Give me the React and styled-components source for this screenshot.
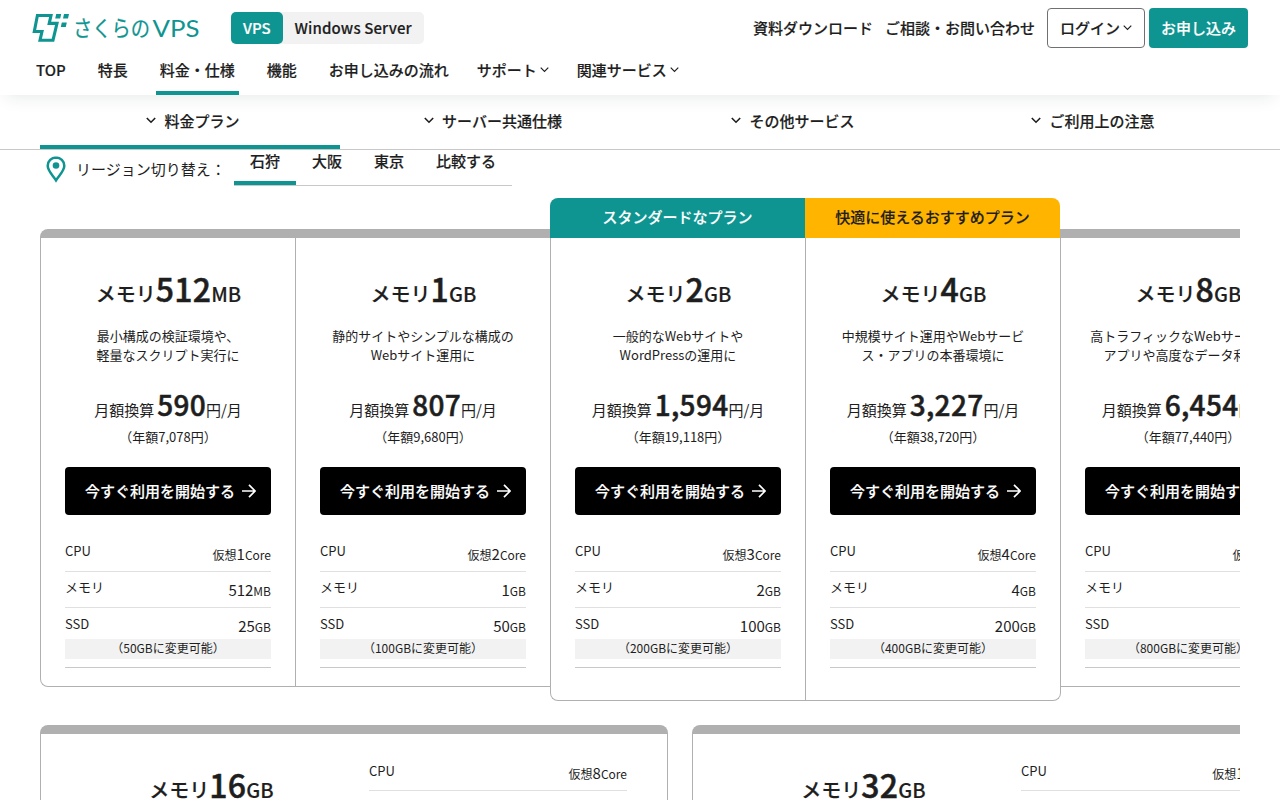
import React from "react";
import styled, { createGlobalStyle, css } from "styled-components";

const teal = "#0f9591";
const ink = "#1e1e1e";
const line = "#b0b0b0";

// Noto Sans CJK has no 600, so thicken the medium weight a little
const semiBold = css`
  font-weight: 500;
  -webkit-text-stroke: 0.16px currentColor;
`;

const GlobalStyle = createGlobalStyle`
  * {
    box-sizing: border-box;
  }
  body {
    margin: 0;
    height: 800px;
    overflow: hidden;
    background: #fff;
    color: ${ink};
    font-family: "Noto Sans CJK JP", "Noto Sans", sans-serif;
    font-size: 15px;
  }
  a {
    color: inherit;
    text-decoration: none;
  }
`;

const plans = [
  {
    size: "512",
    unit: "MB",
    desc: ["最小構成の検証環境や、", "軽量なスクリプト実行に"],
    month: "590",
    year: "7,078",
    core: "1",
    ssd: "25",
    max: "50",
  },
  {
    size: "1",
    unit: "GB",
    desc: ["静的サイトやシンプルな構成の", "Webサイト運用に"],
    month: "807",
    year: "9,680",
    core: "2",
    ssd: "50",
    max: "100",
  },
  {
    size: "2",
    unit: "GB",
    desc: ["一般的なWebサイトや", "WordPressの運用に"],
    month: "1,594",
    year: "19,118",
    core: "3",
    ssd: "100",
    max: "200",
    ribbon: "スタンダードなプラン",
  },
  {
    size: "4",
    unit: "GB",
    desc: ["中規模サイト運用やWebサービ", "ス・アプリの本番環境に"],
    month: "3,227",
    year: "38,720",
    core: "4",
    ssd: "200",
    max: "400",
    ribbon: "快適に使えるおすすめプラン",
    recommended: true,
  },
  {
    size: "8",
    unit: "GB",
    desc: ["高トラフィックなWebサービス・", "アプリや高度なデータ利用に"],
    month: "6,454",
    year: "77,440",
    core: "6",
    ssd: "400",
    max: "800",
  },
];

const largePlans = [
  { size: "16", core: "8" },
  { size: "32", core: "10" },
];

const Chevron = ({ size = 9, stroke = 1.3 }) => (
  <svg width={size} height={size} viewBox="0 0 10 10" fill="none">
    <path d="M.8 3L5 7.200 9.200 3" stroke="currentColor" strokeWidth={stroke} />
  </svg>
);

const Arrow = () => (
  <svg width="14" height="14" viewBox="0 0 14 14" fill="none">
    <path d="M0 7h13M7 .8L13.1 7 7 13.2" stroke="currentColor" strokeWidth="1.7" />
  </svg>
);

const Pin = () => (
  <svg width="20" height="27" viewBox="0 0 20 27">
    <path
      d="M10 1.400C5.400 1.400 1.700 5 1.700 9.700c0 5.200 5 9.300 8.300 14.600 3.300-5.300 8.300-9.400 8.300-14.600 0-4.700-3.700-8.300-8.300-8.300z"
      fill="none"
      stroke={teal}
      strokeWidth="2.500"
    />
    <circle cx="10" cy="9.500" r="3.300" fill={teal} />
  </svg>
);

const Logo = () => (
  <svg width="170" height="36" viewBox="0 0 170 36" fill={teal}>
    <path
      d="M5.400 8.500H19L17.200 16.400H25L21 33.200H8L10 24.500H2.300z"
      fill="none"
      stroke={teal}
      strokeWidth="3.100"
    />
    <path d="M24.200 7h5l-1 4.400h-5zM32 7h5l-1 4.400h-5zM29.800 15.500h5l-1 4.400h-5z" />
    <text
      fontSize="22"
      stroke={teal}
      strokeWidth=".2"
      transform="translate(41 29) scale(.875 1)"
    >
      さくらの
    </text>
    <text
      x="120.500"
      y="29.500"
      fontSize="23"
      fontFamily="Lato, sans-serif"
      textLength="47"
      lengthAdjust="spacingAndGlyphs"
    >
      VPS
    </text>
  </svg>
);

const Header = styled.header`
  position: relative;
  z-index: 2;
  height: 95px;
  background: #fff;
  box-shadow: 0 8px 16px -6px rgba(0, 40, 40, 0.1);
  ${semiBold}
`;

const HeaderTop = styled.div`
  display: flex;
  align-items: center;
  height: 56px;
  padding: 0 32px;
`;

const LogoLink = styled.a`
  display: flex;
  margin: -6px 29px 0 0;
  font-weight: 400;
  -webkit-text-stroke: 0;
`;

const Switch = styled.div`
  display: flex;
  border-radius: 5px;
  background: #f2f2f2;
`;

const SwitchItem = styled.a`
  height: 32px;
  padding: 0 12px;
  border-radius: 5px;
  letter-spacing: ${(p) => (p.$active ? 0 : 0.12)}px;
  line-height: 32px;
  ${(p) => p.$active && `background: ${teal}; color: #fff;`}
`;

const HeaderLinks = styled.div`
  display: flex;
  align-items: center;
  gap: 12px;
  margin-left: auto;
`;

const HeaderLink = styled.a`
  padding-bottom: 2px;
`;

const HeaderButtons = styled.div`
  display: flex;
  gap: 4px;
`;

const HeaderButton = styled.a`
  display: flex;
  align-items: center;
  gap: 3px;
  height: 40px;
  padding: 0 12px 2px;
  border: ${(p) => (p.$primary ? "none" : "1px solid #707070")};
  border-radius: 4px;
  background: ${(p) => (p.$primary ? teal : "#fff")};
  color: ${(p) => (p.$primary ? "#fff" : ink)};
`;

const GlobalNav = styled.nav`
  display: flex;
  gap: 24px;
  height: 39px;
  padding: 0 32px;
`;

const GlobalNavItem = styled.a`
  display: flex;
  align-items: center;
  gap: 3px;
  height: 39px;
  padding: ${(p) => (p.$menu ? "0 4px 8px 0" : "0 4px 8px")};
  border-bottom: 4px solid ${(p) => (p.$active ? teal : "transparent")};
  white-space: nowrap;
`;

const PageNav = styled.nav`
  display: grid;
  grid-template-columns: repeat(4, 300px);
  justify-content: center;
  height: 55px;
  border-bottom: 1px solid #c8c8c8;
  ${semiBold}
`;

const PageNavItem = styled.a`
  display: flex;
  align-items: center;
  justify-content: center;
  gap: 8px;
  padding: 0 0 0 6px;
  border-bottom: 4px solid ${(p) => (p.$active ? teal : "transparent")};
`;

const Region = styled.div`
  display: flex;
  height: 36px;
  padding-left: 46px;
`;

const RegionLabel = styled.div`
  display: flex;
  align-items: center;
  gap: 10px;
  width: 188px;
  white-space: nowrap;
  svg {
    margin-top: 2px;
  }
`;

const RegionTabs = styled.div`
  display: flex;
  border-bottom: 1px solid #c8c8c8;
`;

const RegionTab = styled.a`
  height: 35px;
  padding: 0 16px;
  border-bottom: 4px solid ${(p) => (p.$active ? teal : "transparent")};
  line-height: 21px;
  ${semiBold}
`;

const Plans = styled.main`
  margin: 0 40px;
  padding-top: 12px;
  overflow: hidden;
`;

const PlanRow = styled.div`
  display: flex;
  align-items: flex-start;
  height: 503px;
`;

const Plan = styled.section`
  position: relative;
  flex: none;
  width: 255px;
  margin-top: ${(p) => (p.$featured ? 0 : 31)}px;
`;

const Ribbon = styled.div`
  height: 40px;
  border-radius: ${(p) => (p.$recommended ? "0 8px 0 0" : "8px 0 0 0")};
  background: ${(p) => (p.$recommended ? "#ffb400" : teal)};
  color: ${(p) => (p.$recommended ? ink : "#fff")};
  line-height: 37px;
  text-align: center;
  ${semiBold}
`;

const Bar = styled.div`
  height: 9px;
  border-radius: ${(p) => p.$radius || 0};
  background: ${line};
`;

const PlanBody = styled.div`
  height: ${(p) => (p.$featured ? 463 : 449)}px;
  padding: 26px 24px 0;
  border: solid ${line};
  border-width: 0 0 1px 1px;
  ${(p) => p.$first && "border-bottom-left-radius: 8px;"}
  ${(p) => p.$featured && !p.$last && "border-bottom-left-radius: 8px;"}
  ${(p) =>
    p.$last &&
    `
    position: relative;
    z-index: 1;
    width: 256px;
    border-right-width: 1px;
    border-bottom-right-radius: 8px;
  `}
`;

const Title = styled.h3`
  margin: 0;
  height: 50px;
  padding-left: 1px;
  font-size: 20px;
  line-height: 49px;
  text-align: center;
  white-space: nowrap;
  ${semiBold}
  b {
    font-size: 32px;
    font-weight: 500;
    letter-spacing: 0.2px;
    -webkit-text-stroke-width: 0.5px;
  }
`;

const Description = styled.p`
  display: flex;
  flex-direction: column;
  align-items: center;
  height: 39px;
  margin: 12px -12px 0;
  font-size: 13px;
  line-height: 19px;
  white-space: nowrap;
`;

const Price = styled.p`
  height: 42px;
  margin: 19px 0 0;
  line-height: 40px;
  text-align: center;
  white-space: nowrap;
  b {
    margin-left: 3px;
    font-size: 28px;
    font-weight: 500;
    letter-spacing: 0.3px;
    -webkit-text-stroke: 0.5px currentColor;
  }
`;

const YearPrice = styled.p`
  margin: 0;
  font-size: 13px;
  line-height: 22px;
  text-align: center;
`;

const StartButton = styled.a`
  display: flex;
  align-items: center;
  gap: 7px;
  height: 48px;
  margin: 19px 0 21px;
  padding: 0 0 2px 20px;
  border-radius: 4px;
  background: #000;
  white-space: nowrap;
  ${semiBold}
  && {
    color: #fff;
  }
  svg {
    margin-top: 2px;
  }
`;

const Spec = styled.dl`
  display: flex;
  justify-content: space-between;
  height: 36px;
  margin: 0;
  border-bottom: ${(p) => (p.$plain ? "none" : "1px solid #e0e0e0")};
  font-size: 13px;
  dt {
    line-height: ${(p) => p.$labelLine || 30}px;
  }
  dd {
    margin: 0;
    font-size: 12px;
    line-height: 36px;
  }
  dd b {
    font-size: 15px;
    font-weight: 400;
  }
`;

const SsdNote = styled.div`
  height: 29px;
  margin-top: -5px;
  border-bottom: 1px solid #c8c8c8;
  font-size: 12px;
  text-align: center;
  span {
    display: block;
    height: 20px;
    background: #f2f2f2;
    line-height: 17px;
  }
`;

const LargeRow = styled.div`
  display: flex;
  gap: 24px;
  margin-top: 24px;
`;

const LargePlan = styled.section`
  flex: none;
  width: 628px;
`;

const LargeBody = styled.div`
  display: grid;
  grid-template-columns: 260px 258px;
  column-gap: 28px;
  height: 280px;
  padding: 21px 40px 0;
  border: solid ${line};
  border-width: 0 1px 1px;
  border-radius: 0 0 8px 8px;
  h3 {
    margin-top: 5px;
  }
`;

const PlanTitle = ({ size, unit }) => (
  <Title>
    メモリ<b>{size}</b>
    {unit}
  </Title>
);

const PlanCard = ({ plan, first }) => {
  const featured = plan.ribbon !== undefined;
  return (
    <Plan $featured={featured}>
      {featured ? (
        <Ribbon $recommended={plan.recommended}>{plan.ribbon}</Ribbon>
      ) : (
        <Bar $radius={first && "8px 0 0 0"} />
      )}
      <PlanBody $featured={featured} $first={first} $last={plan.recommended}>
        <PlanTitle size={plan.size} unit={plan.unit} />
        <Description>
          {plan.desc.map((text) => (
            <span key={text}>{text}</span>
          ))}
        </Description>
        <Price>
          月額換算<b>{plan.month}</b>円/月
        </Price>
        <YearPrice>（年額{plan.year}円）</YearPrice>
        <StartButton href="#">
          今すぐ利用を開始する
          <Arrow />
        </StartButton>
        <Spec>
          <dt>CPU</dt>
          <dd>
            仮想<b>{plan.core}</b>Core
          </dd>
        </Spec>
        <Spec>
          <dt>メモリ</dt>
          <dd>
            <b>{plan.size}</b>
            {plan.unit}
          </dd>
        </Spec>
        <Spec $plain $labelLine={32}>
          <dt>SSD</dt>
          <dd>
            <b>{plan.ssd}</b>GB
          </dd>
        </Spec>
        <SsdNote>
          <span>（{plan.max}GBに変更可能）</span>
        </SsdNote>
      </PlanBody>
    </Plan>
  );
};

export default function App() {
  return (
    <>
      <GlobalStyle />
      <Header>
        <HeaderTop>
          <LogoLink href="#">
            <Logo />
          </LogoLink>
          <Switch>
            <SwitchItem $active>VPS</SwitchItem>
            <SwitchItem>Windows Server</SwitchItem>
          </Switch>
          <HeaderLinks>
            <HeaderLink href="#">資料ダウンロード</HeaderLink>
            <HeaderLink href="#">ご相談・お問い合わせ</HeaderLink>
            <HeaderButtons>
              <HeaderButton>
                ログイン
                <Chevron />
              </HeaderButton>
              <HeaderButton $primary>お申し込み</HeaderButton>
            </HeaderButtons>
          </HeaderLinks>
        </HeaderTop>
        <GlobalNav>
          <GlobalNavItem>TOP</GlobalNavItem>
          <GlobalNavItem>特長</GlobalNavItem>
          <GlobalNavItem $active>料金・仕様</GlobalNavItem>
          <GlobalNavItem>機能</GlobalNavItem>
          <GlobalNavItem>お申し込みの流れ</GlobalNavItem>
          <GlobalNavItem $menu>
            サポート
            <Chevron />
          </GlobalNavItem>
          <GlobalNavItem $menu>
            関連サービス
            <Chevron />
          </GlobalNavItem>
        </GlobalNav>
      </Header>

      <PageNav>
        {["料金プラン", "サーバー共通仕様", "その他サービス", "ご利用上の注意"].map(
          (label, i) => (
            <PageNavItem key={label} $active={i === 0}>
              <Chevron size={10} stroke={1.6} />
              {label}
            </PageNavItem>
          )
        )}
      </PageNav>

      <Region>
        <RegionLabel>
          <Pin />
          リージョン切り替え：
        </RegionLabel>
        <RegionTabs>
          {["石狩", "大阪", "東京", "比較する"].map((label, i) => (
            <RegionTab key={label} $active={i === 0}>
              {label}
            </RegionTab>
          ))}
        </RegionTabs>
      </Region>

      <Plans>
        <PlanRow>
          {plans.map((plan, i) => (
            <PlanCard key={plan.size} plan={plan} first={i === 0} />
          ))}
        </PlanRow>
        <LargeRow>
          {largePlans.map((plan) => (
            <LargePlan key={plan.size}>
              <Bar $radius="8px 8px 0 0" />
              <LargeBody>
                <PlanTitle size={plan.size} unit="GB" />
                <div>
                  <Spec $labelLine={32}>
                    <dt>CPU</dt>
                    <dd>
                      仮想<b>{plan.core}</b>Core
                    </dd>
                  </Spec>
                </div>
              </LargeBody>
            </LargePlan>
          ))}
        </LargeRow>
      </Plans>
    </>
  );
}
